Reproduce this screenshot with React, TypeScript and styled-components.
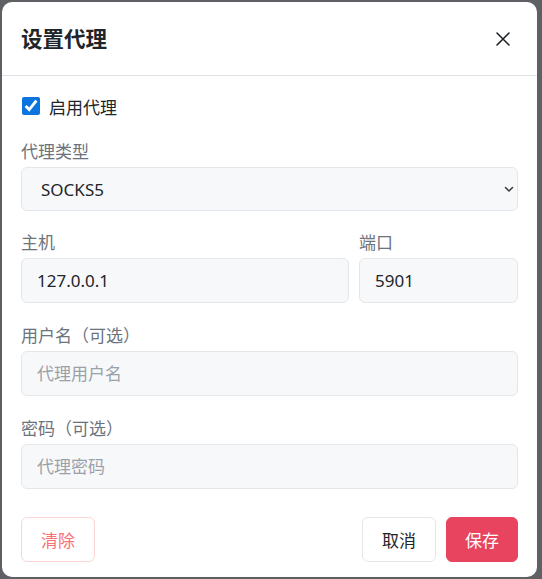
import React, { useState } from 'react';
import styled, { createGlobalStyle } from 'styled-components';

const GlobalStyle = createGlobalStyle`
    html, body {
        margin: 0;
        padding: 0;
        background: #5f6063;
    }
    body {
        font-family: 'Noto Sans', 'Noto Sans CJK SC', sans-serif;
        color: #212529;
    }
`;

const Backdrop = styled.div`
    width: 542px;
    height: 579px;
    padding: 2px 5px 2px 2px;
    box-sizing: border-box;
`;

const Modal = styled.div`
    height: 100%;
    background: #fff;
    border-radius: 10px;
    display: flex;
    flex-direction: column;
    overflow: hidden;
`;

const Header = styled.div`
    height: 73px;
    display: flex;
    align-items: center;
    justify-content: space-between;
    padding: 0 22px 0 19px;
    border-bottom: 1px solid #dee2e6;
`;

const Title = styled.h2`
    margin: 0 0 2px 0;
    font-size: 21.5px;
    font-weight: 700;
    color: #212529;
    font-family: 'Noto Sans CJK SC', sans-serif;
`;

const CloseButton = styled.button`
    border: none;
    background: transparent;
    padding: 0;
    width: 24px;
    height: 24px;
    display: flex;
    align-items: center;
    justify-content: center;
    cursor: pointer;
    color: #212529;
`;

const Body = styled.div`
    padding: 18px 19px 0 19px;
    display: flex;
    flex-direction: column;
`;

const CheckRow = styled.label`
    display: flex;
    align-items: center;
    gap: 9px;
    height: 24px;
    font-size: 17px;
    color: #212529;
    margin-bottom: 20px;
    font-family: 'Noto Sans CJK SC', sans-serif;
`;

const CheckBox = styled.input`
    width: 18px;
    height: 18px;
    margin: 0 0 0 1px;
    accent-color: #0b74de;
`;

const Row = styled.div`
    display: flex;
    gap: 10px;
`;

const Field = styled.div<{ width?: number; gapAfter?: number }>`
    display: flex;
    flex-direction: column;
    flex: ${(p) => (p.width ? `0 0 ${p.width}px` : 1)};
    min-width: 0;
    margin-bottom: ${(p) => p.gapAfter ?? 19}px;
`;

const Label = styled.div`
    font-size: 17px;
    line-height: 25px;
    color: #6c737d;
    margin-bottom: 4px;
    font-family: 'Noto Sans CJK SC', sans-serif;
`;

const Input = styled.input`
    box-sizing: border-box;
    height: 45px;
    width: 100%;
    border: 1px solid #e3e6ea;
    background: #f7f8fa;
    border-radius: 6px;
    padding: 0 15px;
    font-size: 17px;
    color: #212529;
    font-family: 'Noto Sans', 'Noto Sans CJK SC', sans-serif;
    outline: none;
    &::placeholder {
        color: #9ba1a9;
    }
`;

const SelectWrap = styled.div`
    position: relative;
`;

const Select = styled.select`
    box-sizing: border-box;
    height: 44px;
    width: 100%;
    appearance: none;
    border: 1px solid #e3e6ea;
    background: #f7f8fa;
    border-radius: 6px;
    padding: 0 19px;
    font-size: 17px;
    color: #212529;
    font-family: 'Noto Sans', sans-serif;
    outline: none;
`;

const Chevron = styled.svg`
    position: absolute;
    right: 1px;
    top: 50%;
    transform: translateY(-50%);
    pointer-events: none;
`;

const Footer = styled.div`
    margin-top: auto;
    display: flex;
    justify-content: space-between;
    align-items: center;
    padding: 0 19px 15px 19px;
`;

const Actions = styled.div`
    display: flex;
    gap: 10px;
`;

const Button = styled.button<{ variant: 'danger' | 'plain' | 'primary' }>`
    height: 45px;
    padding: 0 ${(p) => (p.variant === 'primary' ? 18 : 19)}px;
    border-radius: 6px;
    font-size: 17px;
    font-family: 'Noto Sans CJK SC', sans-serif;
    cursor: pointer;
    border: 1px solid
        ${(p) => (p.variant === 'danger' ? '#fdd5d5' : p.variant === 'plain' ? '#e3e6ea' : '#e8445f')};
    background: ${(p) => (p.variant === 'primary' ? '#e8445f' : '#fff')};
    color: ${(p) => (p.variant === 'danger' ? '#f77275' : p.variant === 'primary' ? '#fff' : '#212529')};
`;

export default function App() {
    const [enabled, setEnabled] = useState(true);
    return (
        <>
            <GlobalStyle />
            <Backdrop>
                <Modal>
                    <Header>
                        <Title>设置代理</Title>
                        <CloseButton aria-label="关闭">
                            <svg width="16" height="16" viewBox="0 0 16 16">
                                <path d="M2 2L14 14M14 2L2 14" stroke="#212529" strokeWidth="1.6" strokeLinecap="round" />
                            </svg>
                        </CloseButton>
                    </Header>
                    <Body>
                        <CheckRow>
                            <CheckBox type="checkbox" checked={enabled} onChange={() => setEnabled(!enabled)} />
                            启用代理
                        </CheckRow>
                        <Field gapAfter={18}>
                            <Label>代理类型</Label>
                            <SelectWrap>
                                <Select defaultValue="SOCKS5">
                                    <option>HTTP</option>
                                    <option>SOCKS5</option>
                                </Select>
                                <Chevron width="16" height="16" viewBox="0 0 16 16">
                                    <path d="M4.5 6.5l3.5 3.5 3.5-3.5" fill="none" stroke="#343a40" strokeWidth="1.5" strokeLinecap="round" strokeLinejoin="round" />
                                </Chevron>
                            </SelectWrap>
                        </Field>
                        <Row>
                            <Field>
                                <Label>主机</Label>
                                <Input defaultValue="127.0.0.1" />
                            </Field>
                            <Field width={159}>
                                <Label>端口</Label>
                                <Input defaultValue="5901" />
                            </Field>
                        </Row>
                        <Field>
                            <Label>用户名（可选）</Label>
                            <Input placeholder="代理用户名" />
                        </Field>
                        <Field>
                            <Label>密码（可选）</Label>
                            <Input type="password" placeholder="代理密码" />
                        </Field>
                    </Body>
                    <Footer>
                        <Button variant="danger">清除</Button>
                        <Actions>
                            <Button variant="plain">取消</Button>
                            <Button variant="primary">保存</Button>
                        </Actions>
                    </Footer>
                </Modal>
            </Backdrop>
        </>
    );
}
